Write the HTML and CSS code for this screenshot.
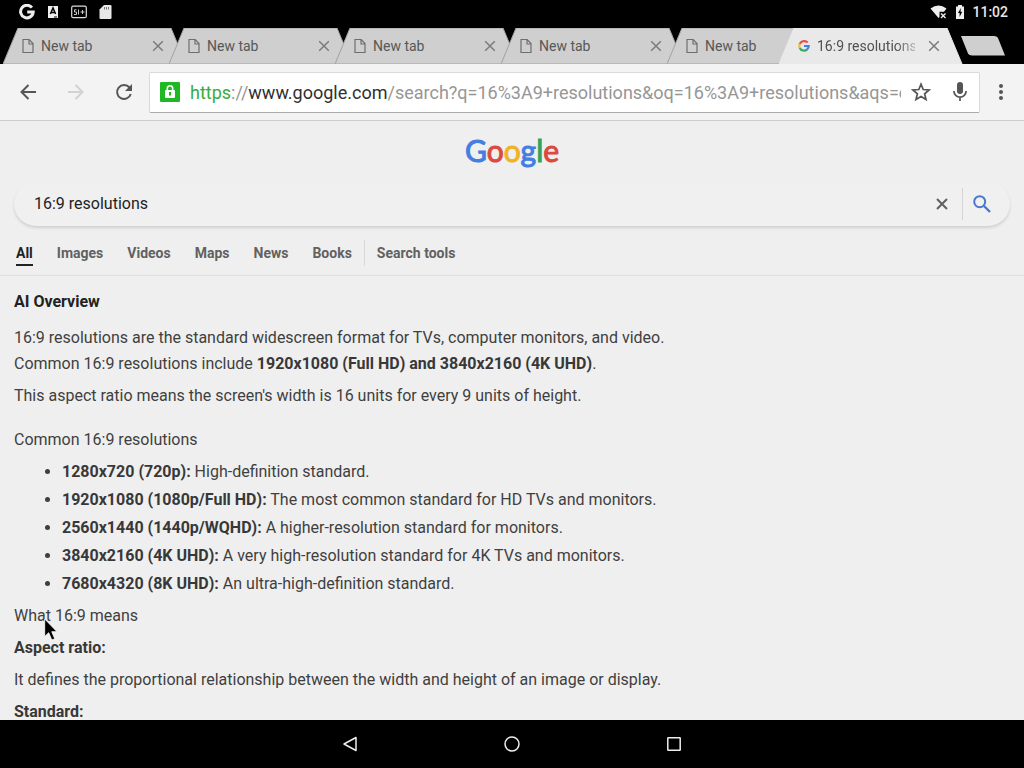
FILE: index.html
```html
<!DOCTYPE html>
<html lang="en">
<head>
<meta charset="utf-8">
<meta name="viewport" content="width=device-width, initial-scale=1">
<title>16:9 resolutions - Google Search</title>
<link rel="stylesheet" href="styles.css">
</head>
<body>
<svg class="defs" aria-hidden="true">
  <symbol id="tab-shape" viewBox="0 0 184 36"><path d="M0 36 15 0H168L183 36Z"/></symbol>
  <symbol id="page" viewBox="0 0 12 16"><path d="M1 1.5H7.2L11 5.5V14.5H1ZM7 1.5V6H11" fill="none" stroke="currentColor" stroke-width="1.2"/></symbol>
  <symbol id="close" viewBox="0 0 12 12"><path d="M1.2 1.2 10.8 10.8M10.8 1.2 1.2 10.8" fill="none" stroke="currentColor" stroke-width="1.5"/></symbol>
</svg>

<header class="status">
  <div class="status-group status-left">
    <svg width="16" height="16" viewBox="0 0 16 16"><path d="M12.900 3.700A6.300 6.300 0 1 0 14.200 8.100H8.200" fill="none" stroke="#eee" stroke-width="3"/></svg>
    <svg width="12" height="14" viewBox="0 0 12 14"><rect x="1" y="1" width="10" height="12" fill="#eee"/><path d="M3.400 9 6 3 8.600 9M4.300 7.400H7.700" fill="none" stroke="#000" stroke-width="1.500"/><path d="M7 12H10" stroke="#000"/></svg>
    <svg width="16" height="14" viewBox="0 0 16 14"><rect x=".7" y="1.200" width="14.600" height="11.500" rx="1.500" fill="none" stroke="#ddd" stroke-width="1.200"/><path d="M3 9.500H5.500V7H3.500V4.800H5.500M7.500 4.500V9.500M9.500 7H13.500M11.500 5V9" fill="none" stroke="#ccc"/></svg>
    <svg width="13" height="16" viewBox="0 0 13 16"><path d="M5 1H11.500Q12.500 1 12.500 2V14Q12.500 15 11.500 15H1.500Q.5 15 .5 14V5.500Z" fill="#e8e8e8"/><path d="M5.500 3V5.500M7.500 3V5.500M9.500 3V5.500" stroke="#777"/></svg>
  </div>
  <div class="status-group status-right">
    <svg width="18" height="14" viewBox="0 0 18 14"><path d="M.5 3.500Q8.500-2.500 16.500 3.500L14 6.700H9.500V12L8.500 13Z" fill="#eee"/><path d="M11 8.500 15.500 13M15.500 8.500 11 13" stroke="#eee" stroke-width="1.400"/></svg>
    <svg width="10" height="16" viewBox="0 0 10 16"><path d="M3 1H7V2.500H9V15H1V2.500H3Z" fill="#eee"/><path d="M5.800 4 3 9H4.600V13L7.200 7.800H5.500Z" fill="#000"/></svg>
    <time class="clock">11:02</time>
  </div>
</header>

<nav class="tabs" aria-label="Open tabs">
  <div class="tab"><svg class="tab-bg"><use href="#tab-shape"/></svg><svg class="page-icon"><use href="#page"/></svg><span class="tab-title">New tab</span><button class="tab-close" aria-label="Close tab"><svg><use href="#close"/></svg></button></div>
  <div class="tab"><svg class="tab-bg"><use href="#tab-shape"/></svg><svg class="page-icon"><use href="#page"/></svg><span class="tab-title">New tab</span><button class="tab-close" aria-label="Close tab"><svg><use href="#close"/></svg></button></div>
  <div class="tab"><svg class="tab-bg"><use href="#tab-shape"/></svg><svg class="page-icon"><use href="#page"/></svg><span class="tab-title">New tab</span><button class="tab-close" aria-label="Close tab"><svg><use href="#close"/></svg></button></div>
  <div class="tab"><svg class="tab-bg"><use href="#tab-shape"/></svg><svg class="page-icon"><use href="#page"/></svg><span class="tab-title">New tab</span><button class="tab-close" aria-label="Close tab"><svg><use href="#close"/></svg></button></div>
  <div class="tab tab-stacked"><svg class="tab-bg"><use href="#tab-shape"/></svg><svg class="page-icon"><use href="#page"/></svg><span class="tab-title">New tab</span></div>
  <div class="tab tab-active"><svg class="tab-bg"><use href="#tab-shape"/></svg>
    <svg class="g-icon" viewBox="0 0 12 12" fill="none" stroke-width="2.200"><path d="M9.600 2.600A4.800 4.800 0 0 0 1.700 4" stroke="#e4554a"/><path d="M1.700 4A4.800 4.800 0 0 0 1.700 8" stroke="#f0bd3a"/><path d="M1.700 8A4.800 4.800 0 0 0 9 9.600" stroke="#3fa75c"/><path d="M9 9.600A4.800 4.800 0 0 0 10.700 6H6" stroke="#4a7de0"/></svg>
    <span class="tab-title">16:9 resolutions - Google Search</span><button class="tab-close" aria-label="Close tab"><svg><use href="#close"/></svg></button></div>
  <button class="new-tab" aria-label="New tab"><svg width="44" height="20" viewBox="0 0 44 20"><path d="M0 0H33Q36 0 37 2L44 19.500H11Q8 19.500 7 17.500Z" fill="#cfcfcf"/></svg></button>
</nav>

<div class="toolbar">
  <button class="tool" aria-label="Back"><svg width="16" height="16" viewBox="0 0 16 16"><path d="M16 8H1.500M8.500 1 1.500 8 8.500 15" fill="none" stroke="#555" stroke-width="2"/></svg></button>
  <button class="tool" aria-label="Forward" disabled><svg width="16" height="16" viewBox="0 0 16 16"><path d="M0 8H14.500M7.500 1 14.500 8 7.500 15" fill="none" stroke="#d2d2d2" stroke-width="2"/></svg></button>
  <button class="tool" aria-label="Reload"><svg width="18" height="18" viewBox="0 0 18 18"><path d="M14.500 4.500A7 7 0 1 0 15.800 11" fill="none" stroke="#555" stroke-width="2"/><path d="M17 1V8H10Z" fill="#555"/></svg></button>
  <div class="omnibox">
    <svg class="lock" viewBox="0 0 20 20"><rect width="20" height="20" rx="1" fill="#1fb825"/><path d="M7.300 9V6.500a2.700 2.700 0 0 1 5.400 0V9" fill="none" stroke="#fff" stroke-width="1.600"/><rect x="5" y="8" width="10" height="8" rx="1" fill="#fff"/><path d="M10 10V13.500" stroke="#1fb825" stroke-width="2"/></svg>
    <div class="url" role="textbox" aria-label="Address" contenteditable="true" spellcheck="false"><span class="url-scheme">https</span><span class="url-rest">://</span><span class="url-host">www.google.com</span><span class="url-rest">/search?q=16%3A9+resolutions&amp;oq=16%3A9+resolutions&amp;aqs=chrome</span></div>
    <button class="omni-btn bookmark" aria-label="Bookmark"><svg width="20" height="20" viewBox="0 0 20 20"><path d="M10 2.200 12.200 7.500 18 8 13.600 11.800 15 17.400 10 14.400 5 17.400 6.400 11.800 2 8 7.800 7.500Z" fill="none" stroke="#555" stroke-width="1.700"/></svg></button>
    <button class="omni-btn" aria-label="Voice search"><svg width="16" height="20" viewBox="0 0 16 20"><rect x="5" y="0" width="6" height="12" rx="3" fill="#555"/><path d="M1.900 9A6.100 6.100 0 0 0 14.100 9M8 15V19" fill="none" stroke="#555" stroke-width="1.700"/></svg></button>
  </div>
  <button class="menu" aria-label="Menu"><svg width="4" height="16" viewBox="0 0 4 16" fill="#555"><circle cx="2" cy="2" r="2"/><circle cx="2" cy="8" r="2"/><circle cx="2" cy="14" r="2"/></svg></button>
</div>

<main class="page">
  <div class="brand"><a class="logo" href="#" aria-label="Google home"><span class="blue">G</span><span class="red">o</span><span class="yellow">o</span><span class="blue">g</span><span class="green">l</span><span class="red">e</span></a></div>
  <form class="search" role="search">
    <input class="search-input" type="text" aria-label="Search" value="16:9 resolutions">
    <button class="search-btn clear" type="button" aria-label="Clear"><svg width="12" height="12" viewBox="0 0 12 12"><path d="M1 1 11 11M11 1 1 11" stroke="#606060" stroke-width="2"/></svg></button>
    <button class="search-btn go" type="submit" aria-label="Search"><svg width="18" height="18" viewBox="0 0 18 18"><circle cx="6.700" cy="6.700" r="5.500" fill="none" stroke="#4a78d0" stroke-width="2"/><path d="M11 11 17 17" stroke="#4a78d0" stroke-width="2.400"/></svg></button>
  </form>
  <nav class="filters" aria-label="Search filters">
    <a class="filter current" href="#">All</a><a class="filter" href="#">Images</a><a class="filter" href="#">Videos</a><a class="filter" href="#">Maps</a><a class="filter" href="#">News</a><a class="filter" href="#">Books</a><a class="filter tools" href="#">Search tools</a>
  </nav>
  <article class="overview">
    <h1>AI Overview</h1>
    <p>16:9 resolutions are the standard widescreen format for TVs, computer monitors, and video.<br>Common 16:9 resolutions include <b>1920x1080 (Full HD) and 3840x2160 (4K UHD)</b>.</p>
    <p>This aspect ratio means the screen's width is 16 units for every 9 units of height.</p>
    <p class="section">Common 16:9 resolutions</p>
    <ul>
      <li><b>1280x720 (720p):</b> High-definition standard.</li>
      <li><b>1920x1080 (1080p/Full HD):</b> The most common standard for HD TVs and monitors.</li>
      <li><b>2560x1440 (1440p/WQHD):</b> A higher-resolution standard for monitors.</li>
      <li><b>3840x2160 (4K UHD):</b> A very high-resolution standard for 4K TVs and monitors.</li>
      <li><b>7680x4320 (8K UHD):</b> An ultra-high-definition standard.</li>
    </ul>
    <p>What 16:9 means</p>
    <p><b>Aspect ratio:</b></p>
    <p>It defines the proportional relationship between the width and height of an image or display.</p>
    <p><b>Standard:</b></p>
  </article>
</main>

<footer class="navbar">
  <button aria-label="Back"><svg width="16" height="16" viewBox="0 0 16 16"><path d="M14 1.500V14.500L2 8Z" fill="none" stroke="#eee" stroke-width="1.500" stroke-linejoin="round"/></svg></button>
  <button aria-label="Home"><svg width="16" height="16" viewBox="0 0 16 16"><circle cx="8" cy="8" r="7" fill="none" stroke="#eee" stroke-width="1.500"/></svg></button>
  <button aria-label="Recent apps"><svg width="16" height="16" viewBox="0 0 16 16"><rect x="1.800" y="1.800" width="12.400" height="12.400" rx=".5" fill="none" stroke="#eee" stroke-width="1.500"/></svg></button>
</footer>

<svg class="cursor" width="14" height="24" viewBox="0 0 14 24" aria-hidden="true"><path d="M.7 1V18.500L4.700 14.700 7.800 22 10.800 20.700 7.700 13.700H13Z" fill="#000" stroke="#fff" stroke-width=".8"/></svg>
</body>
</html>
```
FILE: styles.css
```css
* { box-sizing: border-box; }
body {
  margin: 0;
  height: 100vh;
  display: flex;
  flex-direction: column;
  overflow: hidden;
  background: #000;
  font-family: Roboto, "Liberation Sans", sans-serif;
  font-size: 16px;
  color: #3f3f3f;
}
svg { display: block; flex: none; }
button {
  border: 0;
  padding: 0;
  background: none;
  display: flex;
  align-items: center;
  justify-content: center;
  flex: none;
}
a { color: inherit; text-decoration: none; }
.defs { position: absolute; width: 0; height: 0; }

.status {
  flex: none;
  height: 28px;
  padding: 0 16px 4px 19px;
  display: flex;
  align-items: center;
  justify-content: space-between;
}
.status-group { display: flex; align-items: center; }
.status-left { gap: 12px; }
.status-right { gap: 7px; }
.clock { color: #e8e8e8; font-size: 14px; font-weight: 500; line-height: 24px; }

.tabs { flex: none; display: flex; height: 36px; padding-left: 3px; }
.tab {
  position: relative;
  flex: none;
  width: 184px;
  margin-right: -18px;
  padding: 0 22px 0 19px;
  display: flex;
  align-items: center;
  font-size: 14px;
  color: #575757;
}
.tab-stacked { margin-right: -72px; }
.tab-bg {
  position: absolute;
  inset: 0;
  width: 184px;
  height: 36px;
  fill: #cfcfcf;
  stroke: #a2a2a2;
}
.tab-active .tab-bg { fill: #e9e9e9; stroke: #e9e9e9; }
.page-icon { position: relative; width: 12px; height: 16px; margin-right: 7px; color: #6e6e6e; }
.g-icon { position: relative; width: 12px; height: 12px; margin-right: 7px; }
.tab-title { position: relative; flex: 1; overflow: hidden; white-space: nowrap; line-height: 20px; }
.tab-active .tab-title {
  color: #505050;
  margin-right: 12px;
  mask-image: linear-gradient(to right, #000 80%, rgba(0, 0, 0, .3));
}
.tab-close { position: relative; width: 14px; height: 20px; color: #7b7b7b; }
.tab-close svg { width: 12px; height: 12px; }
.new-tab { margin-left: 16px; }

.toolbar {
  flex: none;
  height: 57px;
  padding: 8px 13px 8px 4px;
  display: flex;
  align-items: center;
  background: #f3f3f3;
  border-bottom: 1px solid #cdcdcd;
}
.tool { width: 48px; height: 40px; }
.omnibox {
  flex: 1;
  min-width: 0;
  height: 41px;
  margin-left: 1px;
  padding: 0 0 0 10px;
  display: flex;
  align-items: center;
  background: #fff;
  border: 1px solid #dadada;
  border-bottom-color: #aaa;
  border-radius: 2px;
}
.lock { width: 20px; height: 20px; margin-right: 10px; }
.url { flex: 1; min-width: 0; overflow: hidden; white-space: nowrap; padding-top: 2px; font-size: 18px; line-height: 24px; outline: 0; }
.url-scheme { color: #38ad3c; }
.url-rest { color: #969696; }
.url-host { color: #303030; }
.omni-btn { width: 38px; height: 40px; }
.bookmark { width: 40px; }
.menu { width: 20px; height: 40px; margin-left: 11px; }

.page { flex: 1; min-height: 0; overflow: hidden; background: #efefef; }
.brand { display: flex; justify-content: center; height: 61px; padding-top: 9px; }
.logo { font-family: Lato, "Liberation Sans", sans-serif; font-size: 30px; font-weight: 400; line-height: 40px; -webkit-text-stroke: 1px currentColor; }
.blue { color: #437ee0; }
.red { color: #dc493e; }
.yellow { color: #edb426; }
.green { color: #35a354; }
.search {
  display: flex;
  align-items: center;
  height: 44px;
  margin: 0 14px;
  border-radius: 22px;
  background: #f0f0f0;
  box-shadow: 0 2px 3px rgba(0, 0, 0, .13);
}
.search-input {
  flex: 1;
  min-width: 0;
  height: 44px;
  padding: 0 20px 2px;
  border: 0;
  outline: 0;
  background: none;
  font: inherit;
  color: #222;
}
.search-btn { width: 40px; height: 32px; }
.go { width: 48px; border-left: 1px solid #d4d4d4; padding-right: 9px; }

.filters {
  display: flex;
  gap: 24px;
  height: 50px;
  padding: 14px 16px 0;
  border-bottom: 1px solid #dfdfdf;
  font-size: 14px;
  font-weight: 700;
  color: #616161;
}
.filter { height: 26px; line-height: 26px; }
.current { color: #222; border-bottom: 2px solid #222; }
.tools { margin-left: -12px; padding-left: 12px; border-left: 1px solid #d8d8d8; }

.overview { padding: 13px 14px; line-height: 26px; }
.overview h1 { margin: 0 0 10px; font-size: 16px; font-weight: 700; line-height: 26px; color: #222; }
.overview p { margin: 0 0 6px; }
.overview .section { margin-top: 18px; }
.overview ul { margin: 0 0 6px; padding-left: 48px; display: grid; gap: 2px; }
.overview b { font-weight: 700; color: #383838; }

.navbar { flex: none; height: 48px; display: flex; justify-content: center; align-items: center; gap: 114px; }
.navbar button { width: 48px; height: 48px; }
.cursor { position: absolute; left: 44px; top: 618px; }
```
